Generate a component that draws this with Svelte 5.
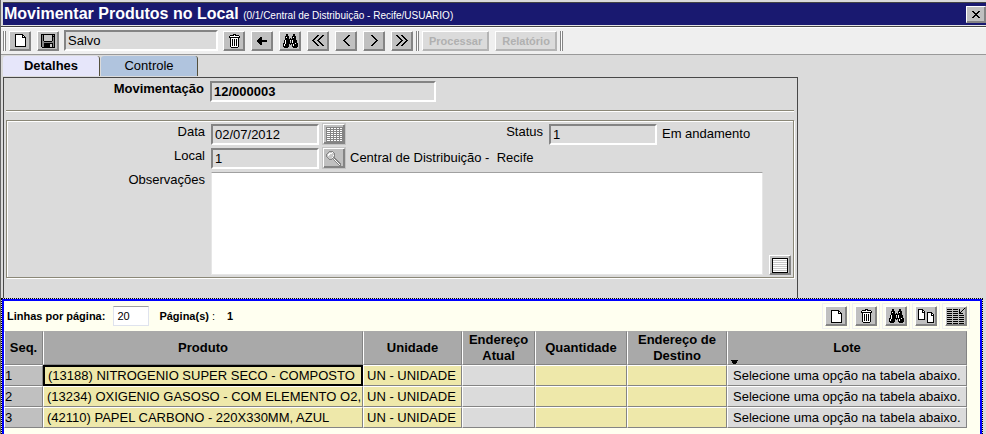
<script>
  const columns = [
    { title: 'Seq.', width: 39 },
    { title: 'Produto', width: 320 },
    { title: 'Unidade', width: 99 },
    { title: 'Endereço Atual', width: 73 },
    { title: 'Quantidade', width: 92 },
    { title: 'Endereço de Destino', width: 100 },
    { title: 'Lote' }
  ];

  const lotHint = 'Selecione uma opção na tabela abaixo.';
  const rows = [
    { seq: 1, product: '(13188) NITROGENIO SUPER SECO - COMPOSTO', unit: 'UN - UNIDADE', lot: lotHint },
    { seq: 2, product: '(13234) OXIGENIO GASOSO - COM ELEMENTO O2,', unit: 'UN - UNIDADE', lot: lotHint },
    { seq: 3, product: '(42110) PAPEL CARBONO - 220X330MM, AZUL', unit: 'UN - UNIDADE', lot: lotHint }
  ];

  let selected = $state(1);
  let notes = $state('');
  let pageSize = $state('20');

  // Pixel icons: '#' is black, 'o' is white, 'g' is grey, 'l' is light grey.
  const bitmaps = {
    page: [
      '########...',
      '#oooooo##..',
      '#oooooo#o#.',
      '#oooooo####',
      '#ooooooooo#',
      '#ooooooooo#',
      '#ooooooooo#',
      '#ooooooooo#',
      '#ooooooooo#',
      '#ooooooooo#',
      '#ooooooooo#',
      '#ooooooooo#',
      '###########'
    ],
    save: [
      '##############',
      '#g#llllllll#g#',
      '#g#llllllll###',
      '#g#llllllll#g#',
      '#g#llllllll#g#',
      '#g#llllllll#g#',
      '#g#llllllll#g#',
      '#gg########gg#',
      '#gggggggggggg#',
      '#gg#########g#',
      '#gg######ll#g#',
      '#gg######ll#g#',
      '#gg######ll#g#',
      '.#############'
    ],
    trash: [
      '....###....',
      '.####o####.',
      '#ooooooooo#',
      '###########',
      '.#ooooooo#.',
      '.#o#o#o#o#.',
      '.#o#o#o#o#.',
      '.#o#o#o#o#.',
      '.#o#o#o#o#.',
      '.#o#o#o#o#.',
      '.#o#o#o#o#.',
      '.#o#o#o#o#.',
      '.#ooooooo#.',
      '..#######..'
    ],
    find: [
      '...##.....##...',
      '...##.....##...',
      '..####...####..',
      '..#o##...#o##..',
      '..####.#.####..',
      '..###########..',
      '.#o####o#o####.',
      '.#o####.#o####.',
      '.#o####.#o####.',
      '##o#########o##',
      '#o####.#.#o####',
      '#o####...#o####',
      '######...######',
      '.####.....####.'
    ],
    back: [
      '...##.....',
      '..###.....',
      '.####.....',
      '##########',
      '##########',
      '.####.....',
      '..###.....',
      '...##.....'
    ],
    first: [
      '.....##...##',
      '....##...##.',
      '...##...##..',
      '..##...##...',
      '.##...##....',
      '##...##.....',
      '.##...##....',
      '..##...##...',
      '...##...##..',
      '....##...##.',
      '.....##...##'
    ],
    prev: [
      '.....##',
      '....##.',
      '...##..',
      '..##...',
      '.##....',
      '##.....',
      '.##....',
      '..##...',
      '...##..',
      '....##.',
      '.....##'
    ],
    copy: [
      '#####...........',
      '#ooo##..........',
      '#ooo#o#.........',
      '#ooo###..#####..',
      '#ooooo#..#ooo##.',
      '#ooooo#..#ooo#o#',
      '#ooooo#..#ooo###',
      '#ooooo#..#ooooo#',
      '#ooooo#..#ooooo#',
      '#ooooo#..#ooooo#',
      '#######..#ooooo#',
      '.........#ooooo#',
      '.........#ooooo#',
      '.........#######'
    ],
    fill: [
      '.................#',
      '#####.#####.#...#.',
      '............#..#..',
      '#####.#####.#.#...',
      '............##....',
      '#####.#####.####..',
      '..................',
      '#####.#####.#####.',
      '..................',
      '#####.#####.#####.',
      '..................',
      '#####.#####.#####.',
      '..................',
      '#####.#####.#####.',
      '..................',
      '#####.#####.#####.'
    ],
    close: [
      '##....##',
      '.##..##.',
      '..####..',
      '...##...',
      '..####..',
      '.##..##.',
      '##....##'
    ],
    calendar: [
      'ggggggggggggggggg',
      ...Array.from({ length: 7 }, () => ['gooogoogoogoogoog', 'ggggggggggggggggg']).flat()
    ],
    lines: [
      '################',
      ...Array.from({ length: 6 }, () => ['#oooooooooooooo#', '#llllllllllllll#']).flat(),
      '#oooooooooooooo#',
      '################'
    ],
    lens: [
      '...gggg.........',
      '..glllog........',
      '.glooollg.......',
      'gloollllg.......',
      'glollllog.......',
      'glllllllg.......',
      '.gllllogg.......',
      '..glllg.gg......',
      '...ggg.gogg.....',
      '........gogg....',
      '.........gogg...',
      '..........gogg..',
      '...........gogg.',
      '............gog.',
      '.............gg.'
    ],
    marker: ['#######', '.#####.', '.#####.', '..###..']
  };
  const mirror = (bitmap) => bitmap.map((line) => [...line].reverse().join(''));
  bitmaps.next = mirror(bitmaps.prev);
  bitmaps.last = mirror(bitmaps.first);

  const inks = { '#': '#000', o: '#fff', g: '#848484', l: '#c8c8c8' };

  function trace(bitmap, ink) {
    let d = '';
    bitmap.forEach((line, y) => {
      for (let x = 0; x < line.length; x++) {
        if (line[x] === ink) d += `M${x} ${y}h1v1h-1z`;
      }
    });
    return d;
  }

  const navButtons = [
    ['trash', 'Excluir'],
    ['back', 'Voltar'],
    ['find', 'Pesquisar'],
    ['first', 'Primeiro'],
    ['prev', 'Anterior'],
    ['next', 'Próximo'],
    ['last', 'Último']
  ];
  const gridButtons = [
    ['page', 'Nova linha'],
    ['trash', 'Excluir linha'],
    ['find', 'Pesquisar linhas'],
    ['copy', 'Copiar linha'],
    ['fill', 'Preencher coluna']
  ];
</script>

{#snippet icon(name)}
  {@const bitmap = bitmaps[name]}
  <svg width={bitmap[0].length} height={bitmap.length} shape-rendering="crispEdges" aria-hidden="true">
    {#each Object.entries(inks) as [ink, color]}
      <path d={trace(bitmap, ink)} fill={color} />
    {/each}
  </svg>
{/snippet}

{#snippet tool(name, label)}
  <button class="tool" type="button" aria-label={label}>{@render icon(name)}</button>
{/snippet}

<div class="window">
  <header class="titlebar">
    <h1>Movimentar Produtos no Local <small>(0/1/Central de Distribuição - Recife/USUARIO)</small></h1>
    <button class="tool close" type="button" aria-label="Fechar">{@render icon('close')}</button>
  </header>

  <div class="toolbar">
    <span class="grip"></span>
    <div class="tools">
      {@render tool('page', 'Novo')}
      {@render tool('save', 'Salvar')}
    </div>
    <input class="field state" value="Salvo" readonly aria-label="Situação" />
    <div class="tools">
      {#each navButtons as [name, label]}
        {@render tool(name, label)}
      {/each}
    </div>
    <span class="grip"></span>
    <div class="tools">
      <button class="action" type="button" disabled>Processar</button>
      <button class="action" type="button" disabled>Relatório</button>
    </div>
    <span class="grip"></span>
  </div>

  <nav class="tabs">
    <button class="tab active" type="button">Detalhes</button>
    <button class="tab" type="button">Controle</button>
  </nav>

  <main class="panel">
    <div class="row">
      <label class="strong" for="movement">Movimentação</label>
      <input id="movement" class="field strong wide" value="12/000003" readonly />
    </div>
    <hr />
    <div class="group">
      <div class="row">
        <label for="date">Data</label>
        <input id="date" class="field" value="02/07/2012" readonly />
        <span class="lookup">{@render tool('calendar', 'Calendário')}</span>
        <label for="status">Status</label>
        <input id="status" class="field" value="1" readonly />
        <span class="note">Em andamento</span>
      </div>
      <div class="row">
        <label for="place">Local</label>
        <input id="place" class="field" value="1" readonly />
        <span class="lookup">{@render tool('lens', 'Procurar local')}</span>
        <span class="note">Central de Distribuição -&nbsp; Recife</span>
      </div>
      <div class="row notes">
        <label for="notes">Observações</label>
        <textarea id="notes" bind:value={notes}></textarea>
        {@render tool('lines', 'Ampliar observações')}
      </div>
    </div>
  </main>

  <section class="grid">
    <div class="inner">
      <div class="gridbar">
        <label for="size">Linhas por página:</label>
        <input id="size" bind:value={pageSize} />
        <span class="pages"><b>Página(s)</b> :</span>
        <b>1</b>
        <div class="gridtools">
          {#each gridButtons as [name, label]}
            <span class="slot">{@render tool(name, label)}</span>
          {/each}
        </div>
      </div>
      <table>
        <colgroup>
          {#each columns as column}
            <col style:width={column.width ? `${column.width}px` : 'auto'} />
          {/each}
        </colgroup>
        <thead>
          <tr>
            {#each columns as column, i}
              <th>
                {column.title}
                {#if i === columns.length - 1}<span class="marker">{@render icon('marker')}</span>{/if}
              </th>
            {/each}
          </tr>
        </thead>
        <tbody>
          {#each rows as row}
            <tr>
              <td class="seq">{row.seq}</td>
              <td class="edit" class:selected={row.seq === selected} onclick={() => (selected = row.seq)}>{row.product}</td>
              <td class="edit">{row.unit}</td>
              <td></td>
              <td class="edit"></td>
              <td class="edit"></td>
              <td>{row.lot}</td>
            </tr>
          {/each}
        </tbody>
      </table>
    </div>
  </section>
</div>

<style>
  :global(body) {
    background: #dbdbdb;
  }

  .window {
    box-sizing: border-box;
    display: flex;
    flex-direction: column;
    min-height: 100vh;
    border-left: 1px solid #666;
    font: 13px/16px 'Liberation Sans', Arial, sans-serif;
    color: #000;
  }

  .window :global(*) {
    box-sizing: border-box;
  }

  svg {
    display: block;
    flex: none;
  }

  button,
  input,
  textarea {
    margin: 0;
    border-radius: 0;
    font: inherit;
    color: inherit;
  }

  .titlebar {
    display: flex;
    align-items: center;
    justify-content: space-between;
    height: 24px;
    margin: 2px 0 0 2px;
    border-top: 1px solid #444;
    border-bottom: 1px solid #e4e4e4;
    background: #191970;
    color: #fff;
  }

  h1 {
    margin: 0;
    padding: 2px 0 0 1px;
    font-size: 16px;
    line-height: 20px;
    white-space: nowrap;
  }

  small {
    font-size: 10px;
    font-weight: normal;
  }

  .tool {
    display: flex;
    flex: none;
    align-items: center;
    justify-content: center;
    width: 22px;
    height: 20px;
    padding: 0;
    border: 1px solid;
    border-color: #fff #848484 #848484 #fff;
    box-shadow: inset -1px -1px #848484;
    background: #c0c0c0;
  }

  .close {
    width: 20px;
    height: 17px;
  }

  .toolbar {
    display: flex;
    align-items: center;
    gap: 3px;
    height: 29px;
    padding-left: 2px;
    border-top: 1px solid #444;
    border-bottom: 1px solid #999;
    background: #efefef;
    box-shadow: inset 0 1px #fff;
  }

  .tools {
    display: flex;
    gap: 6px;
  }

  .grip {
    width: 3px;
    height: 20px;
    border: 1px solid #848484;
    border-width: 0 1px;
    background: #fff;
  }

  .field {
    flex: none;
    width: 108px;
    height: 21px;
    padding: 0 2px;
    border: 2px solid;
    border-color: #848484 #fff #fff #848484;
    background: #dbdbdb;
    outline: none;
  }

  .field.state {
    width: 154px;
    margin: 0 2px;
  }

  .field.wide {
    width: 226px;
  }

  .strong {
    font-weight: bold;
  }

  .action {
    height: 20px;
    padding: 0 6px;
    border: 1px solid;
    border-color: #fff #b4b4b4 #b4b4b4 #fff;
    box-shadow: inset -1px -1px #b4b4b4;
    background: #dbdbdb;
    font-size: 11px;
    font-weight: bold;
    color: #b0b0b0;
  }

  .tabs {
    display: flex;
    gap: 1px;
    padding: 1px 0 1px 2px;
  }

  .tab {
    width: 97px;
    height: 20px;
    padding: 0;
    border: 0;
    border-right: 1px solid #54503c;
    border-radius: 3px 3px 0 0;
    background: #b0c4de;
  }

  .tab.active {
    background: #e6e6fa;
    font-weight: bold;
  }

  .panel {
    margin: 0 188px 0 2px;
    padding: 3px 3px 20px 2px;
    border: 1px solid #484848;
    border-bottom: 0;
  }

  .row {
    display: flex;
    align-items: flex-start;
  }

  .row label {
    flex: none;
    width: 204px;
    padding-right: 6px;
    text-align: right;
  }

  hr {
    height: 2px;
    margin: 8px 0;
    border: 0;
    border-top: 1px solid #8b8878;
    background: #fff;
  }

  .group {
    display: flex;
    flex-direction: column;
    gap: 3px;
    padding: 3px 2px 2px 0;
    border: 1px solid #8b8878;
    box-shadow: inset 1px 1px #fff, 1px 1px #fff;
  }

  .lookup {
    margin-left: 4px;
    outline: 1px solid #c4c4c4;
  }

  .note {
    padding: 2px 5px;
  }

  .notes .tool {
    align-self: flex-end;
    margin-left: 6px;
  }

  textarea {
    display: block;
    flex: 1;
    min-width: 0;
    height: 103px;
    padding: 2px;
    border: 1px solid;
    border-color: #a0a0a0 #e6e6e6 #e6e6e6;
    background: #fff;
    resize: none;
    outline: none;
  }

  .grid {
    display: flex;
    flex: 1;
    margin-right: 3px;
    border: 1px dotted #000;
    border-bottom: 0;
  }

  .inner {
    flex: 1;
    min-width: 0;
    border: 2px solid #00f;
    border-bottom: 0;
    background: #fffff0;
  }

  .gridbar {
    display: flex;
    align-items: center;
    height: 30px;
    padding: 0 10px 0 3px;
    font-size: 11px;
  }

  .gridbar label {
    font-weight: bold;
  }

  .gridbar input {
    width: 36px;
    height: 20px;
    margin: 0 10px 0 8px;
    padding: 0 3px;
    border: 1px solid #dfe3ee;
    border-top-color: #a0a0a0;
    background: #fff;
    outline: none;
  }

  .pages {
    margin-right: 12px;
  }

  .gridtools {
    display: flex;
    gap: 2px;
    margin-left: auto;
  }

  .slot {
    padding: 2px;
    border: 1px solid #f0f0f0;
  }

  table {
    width: calc(100% - 13px);
    border-spacing: 0;
    table-layout: fixed;
  }

  th,
  td {
    height: 21px;
    border: 1px solid;
    border-color: #fff #848484 #848484 #fff;
    background: #dbdbdb;
  }

  th {
    position: relative;
    height: 34px;
    padding: 0;
    border-top-color: #a9a9a9;
    background: #a9a9a9;
  }

  td {
    padding: 0 5px;
    line-height: 18px;
    white-space: nowrap;
    overflow: hidden;
  }

  td.seq {
    padding: 0;
    background: #c0c0c0;
  }

  td.edit {
    padding: 0 0 0 3px;
    background: #eee8aa;
  }

  td.selected {
    border: 2px solid #000;
    line-height: 17px;
  }

  .marker {
    position: absolute;
    bottom: 0;
    left: 3px;
  }
</style>
